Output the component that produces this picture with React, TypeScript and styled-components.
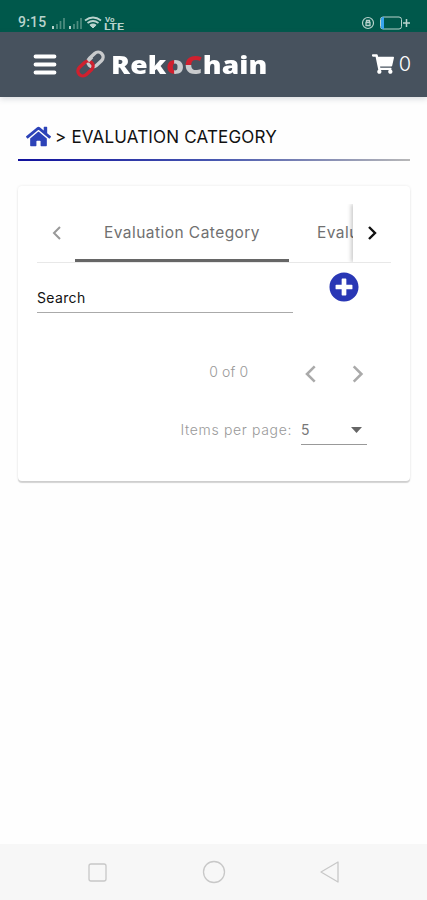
import React from "react";
import styled, { createGlobalStyle, css } from "styled-components";
import { FaShoppingCart, FaHome, FaPlusCircle } from "react-icons/fa";

const Global = createGlobalStyle`
  *{box-sizing:border-box}
  body{margin:0;background:#fff}
`;
const Screen = styled.div`
  width:427px;height:900px;display:flex;flex-direction:column;overflow:hidden;
  background:#fefefe;font-family:Inter,"Open Sans",sans-serif;color:#111;
`;
const StatusBar = styled.div`
  height:32px;flex:none;background:#00584b;display:flex;align-items:flex-end;
  justify-content:space-between;padding:0 17px 1px 18px;color:#b9d3cd;
`;
const StatusGroup = styled.div`display:flex;align-items:center;height:17px;`;
const Clock = styled.span`font:500 14px/17px Roboto,sans-serif;width:32px;white-space:nowrap;letter-spacing:.2px;`;
const Header = styled.header`
  height:65px;flex:none;background:#47525e;display:flex;align-items:center;color:#fff;
  padding:0 16px 0 33px;box-shadow:0 2px 6px rgba(71,82,94,.2);
`;
const Brand = styled.div`display:flex;align-items:center;margin-left:18px;flex:1;padding-bottom:1px;`;
const BrandName = styled.div`
  margin-left:4px;font:800 25px/34px "Open Sans",sans-serif;white-space:nowrap;letter-spacing:.1px;
  transform:scaleX(1.125);transform-origin:left center;
`;
const Split = styled.span<{ $angle: string; $at: string }>`
  background:linear-gradient(${p => p.$angle},#d0202e ${p => p.$at},#c9cbcd ${p => p.$at});
  -webkit-background-clip:text;background-clip:text;color:transparent;
`;
const Cart = styled.div`display:flex;align-items:center;gap:5px;font-size:20px;line-height:24px;font-weight:300;padding-bottom:2px;`;
const Crumbs = styled.nav`
  margin:22px 17px 0 18px;height:42px;flex:none;display:flex;padding-left:8px;
  border-bottom:2px solid;border-image:linear-gradient(90deg,#10109c,#4757b0 50%,#b8b8b8) 1;
`;
const HomeIcon = styled(FaHome)`margin-top:5px;flex:none;`;
const CrumbText = styled.span`font-size:17px;line-height:36px;margin-left:4px;white-space:nowrap;letter-spacing:.18px;`;
const Card = styled.main`
  margin:25px 17px 0 18px;height:295px;flex:none;border-radius:4px;background:#fff;padding:18px 19px 0;
  box-shadow:0 2px 1px rgba(0,0,0,.16),0 0 3px rgba(0,0,0,.09);
`;
const Tabs = styled.div`display:flex;height:59px;border-bottom:1px solid #e8e8e8;`;
const Pager = styled.div<{ $next?: boolean }>`
  width:38px;height:58px;flex:none;display:flex;align-items:center;justify-content:center;
  ${p => p.$next && css`box-shadow:-2px 0 4px rgba(0,0,0,.2);clip-path:inset(0 0 0 -8px);`}
`;
const TabList = styled.div`flex:1;display:flex;overflow:hidden;height:58px;`;
const Tab = styled.div<{ $active?: boolean }>`
  height:58px;flex:none;padding:0 28px 0 29px;font-size:15.5px;line-height:58px;font-weight:400;
  color:#707070;white-space:nowrap;letter-spacing:.45px;
  ${p => p.$active ? css`width:214px;border-bottom:3px solid #666;` : css`padding-left:28px;`}
`;
const SearchRow = styled.div`display:flex;height:50px;`;
const SearchField = styled.div`
  width:256px;border-bottom:1px solid #aaa;font-size:14px;line-height:69px;letter-spacing:.35px;
`;
const AddButton = styled.div`margin:9px 0 0 36px;height:30px;`;
const PageNav = styled.div`
  display:flex;align-items:center;height:40px;margin-top:41px;padding-right:21px;justify-content:flex-end;
  color:#999;font-size:14px;
`;
const Range = styled.span`margin-right:49.5px;padding-bottom:5px;white-space:nowrap;font-weight:300;letter-spacing:.1px;`;
const NavGap = styled.span`width:23.5px;`;
const PageSize = styled.div`
  display:flex;margin-top:21px;padding-right:24px;justify-content:flex-end;color:#999;font-size:14px;line-height:29px;
`;
const SizeLabel = styled.span`white-space:nowrap;letter-spacing:.65px;font-weight:300;`;
const Select = styled.div`
  width:66px;height:30px;margin-left:9px;border-bottom:1px solid #999;color:#777;display:flex;
  align-items:center;justify-content:space-between;padding-right:5px;
`;
const SystemNav = styled.footer`
  height:56px;margin-top:auto;flex:none;background:#f7f7f7;display:flex;align-items:center;
  justify-content:space-between;padding:0 86px;
`;

const Signal = () => (
  <svg width="17" height="14" viewBox="0 0 17 14"><path d="M3 10v3" stroke="currentColor" strokeWidth="2"/><path d="M7 8v5M10.500 5v8M14 2v11" stroke="#4f8d80" strokeWidth="1.700"/></svg>
);
const Chevron = ({ right, color, w = 2, h = 14 }: { right?: boolean; color: string; w?: number; h?: number }) => (
  <svg width={h * 19 / 14} height={h} viewBox="0 0 19 14" fill="none" stroke={color} strokeWidth={w}>
    <path d={right ? "M6 1l6 6-6 6" : "M13 1L7 7l6 6"} />
  </svg>
);

export default function App() {
  return (
    <><Global /><Screen>
      <StatusBar>
        <StatusGroup>
          <Clock>9:15</Clock><Signal /><Signal />
          <svg width="18" height="14" viewBox="0 0 18 14" fill="none" stroke="currentColor"><path d="M1 4.500q8-6 16 0M3.500 7q5.500-4 11 0M6 9.500q3-2 6 0" strokeWidth="1.800"/><path d="M6.500 9.500h5L9 12z" fill="currentColor"/></svg>
          <svg width="23" height="16" viewBox="0 0 23 16" fill="currentColor" fontFamily="Roboto" fontWeight="700"><text x="3" y="7" fontSize="8">Vo</text><text x="2" y="15" fontSize="9" textLength="20" lengthAdjust="spacingAndGlyphs">LTE</text></svg>
        </StatusGroup>
        <StatusGroup>
          <svg width="49" height="16" viewBox="0 0 49 16" fill="none" stroke="currentColor"><circle cx="7" cy="8" r="5.500" strokeWidth="1.200"/><path d="M5 7.500h4v3H5zM5.500 7V5.500h3V7" strokeWidth="1.300"/><rect x="19.500" y="2" width="21" height="12" rx="2.500"/><path d="M20 4a2 2 0 0 1 2-2h1v12h-1a2 2 0 0 1-2-2z" fill="#38a5ef" stroke="none"/><path d="M42 8h7M45.500 4v8" strokeWidth="1.500"/></svg>
        </StatusGroup>
      </StatusBar>
      <Header>
        <svg width="24" height="22" viewBox="0 0 24 22" fill="none" stroke="currentColor" strokeWidth="3.800" strokeLinecap="round"><path d="M2.500 2.500h19M2.500 10.500h19M2.500 18.500h19"/></svg>
        <Brand>
          <svg width="32" height="30" viewBox="0 0 32 30" fill="none" strokeWidth="3.400">
            <rect x="-8.500" y="-5" width="17" height="10" rx="5" transform="translate(20.5 10.5) rotate(-43)" stroke="#c9cbcd"/>
            <rect x="-8.500" y="-5" width="17" height="10" rx="5" transform="translate(10.5 19.5) rotate(-43)" stroke="#d0202e"/>
            <path d="M13 12l4-4" stroke="#c9cbcd"/>
          </svg>
          <BrandName>Rek<Split $angle="90deg" $at="44%">o</Split><Split $angle="180deg" $at="52%">C</Split>hain</BrandName>
        </Brand>
        <Cart><FaShoppingCart size={22} /><span>0</span></Cart>
      </Header>
      <Crumbs><HomeIcon size={25} color="#2c42b8" /><CrumbText>&gt; EVALUATION CATEGORY</CrumbText></Crumbs>
      <Card>
        <Tabs>
          <Pager><Chevron color="#999" /></Pager>
          <TabList><Tab $active>Evaluation Category</Tab><Tab>Evaluation</Tab></TabList>
          <Pager $next><Chevron right color="#111" w={2.4} /></Pager>
        </Tabs>
        <SearchRow><SearchField>Search</SearchField><AddButton><FaPlusCircle size={30} color="#2937b5" /></AddButton></SearchRow>
        <PageNav><Range>0 of 0</Range><Chevron color="#aaa" h={18} /><NavGap /><Chevron right color="#aaa" h={18} /></PageNav>
        <PageSize><SizeLabel>Items per page:</SizeLabel><Select><span>5</span><svg width="11" height="6"><path d="M0 0h11L5.500 6z" fill="#666"/></svg></Select></PageSize>
      </Card>
      <SystemNav>
        <svg width="22" height="22" viewBox="0 0 22 22" fill="none" stroke="#c8c8c8" strokeWidth="1.300"><rect x="3" y="3" width="17" height="17" rx="2"/></svg>
        <svg width="24" height="24" viewBox="0 0 24 24" fill="none" stroke="#c8c8c8" strokeWidth="1.300"><circle cx="12" cy="12" r="10.500"/></svg>
        <svg width="22" height="24" viewBox="0 0 22 24" fill="none" stroke="#c8c8c8" strokeWidth="1.300" strokeLinejoin="round"><path d="M19 2v20L2 12z"/></svg>
      </SystemNav>
    </Screen></>
  );
}
